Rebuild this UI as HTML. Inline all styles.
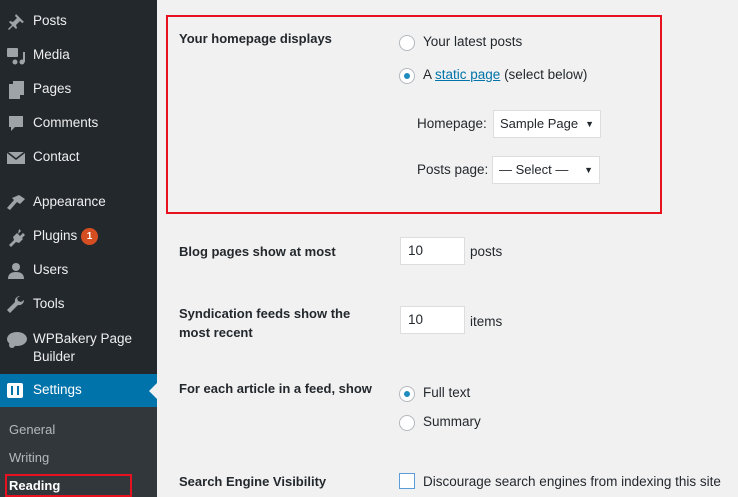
<!DOCTYPE html>
<html><head><meta charset="utf-8"><style>
*{margin:0;padding:0;box-sizing:border-box}
body{width:738px;height:497px;overflow:hidden;background:#f1f1f1;font-family:"Liberation Sans",sans-serif;font-size:14px;color:#23282d;position:relative}
.side{position:absolute;left:0;top:0;width:157px;height:497px;background:#23282d}
.it{position:absolute;left:33px;color:#eee;font-size:13.5px}
.ic{position:absolute;left:6px;width:19px;height:17px}
.sub{position:absolute;left:0;top:407px;width:157px;height:90px;background:#32373c}
.s{position:absolute;left:9px;color:#b4b9be;font-size:13px}
.a{position:absolute;font-size:13.5px}
.b{font-weight:bold;font-size:13px}
.radio{position:absolute;width:16px;height:16px;border:1px solid #b4b9be;border-radius:50%;background:#fff}
.radio.on::after{content:"";position:absolute;left:4px;top:4px;width:6px;height:6px;border-radius:50%;background:#1e8cbe}
.inp{position:absolute;background:#fff;border:1px solid #ddd;font-size:13.5px;padding:0 7px}
svg{position:absolute;left:6px}
</style></head><body>
<div class="side">
<svg style="top:12px" width="20" height="20" viewBox="0 0 20 20" fill="#9ea3a8"><path d="M10 2l8 8-2 1-2-2-4 4 1 3-1 1-3-3-4 4-1-1 4-4-3-3 1-1 3 1 4-4-2-2z"/></svg>
<div class="it" style="top:13px">Posts</div>
<svg style="top:46px" width="20" height="20" viewBox="0 0 20 20" fill="#9ea3a8"><rect x="1" y="2" width="11" height="9" rx="1"/><circle cx="9" cy="16" r="2.5"/><circle cx="16" cy="16" r="2.5"/><rect x="17" y="6" width="2" height="10"/></svg>
<div class="it" style="top:47px">Media</div>
<svg style="top:80px" width="20" height="20" viewBox="0 0 20 20" fill="#9ea3a8"><rect x="7" y="1" width="11" height="14"/><rect x="3" y="4" width="11" height="15"/></svg>
<div class="it" style="top:81px">Pages</div>
<svg style="top:114px" width="20" height="20" viewBox="0 0 20 20" fill="#9ea3a8"><path d="M3 2h14v11h-8l-4 4v-4H3z"/></svg>
<div class="it" style="top:115px">Comments</div>
<svg style="top:148px" width="20" height="20" viewBox="0 0 20 20" fill="#9ea3a8"><path d="M1 4h18v12H1z"/><path d="M1 4l9 7 9-7" stroke="#23282d" stroke-width="1.6" fill="none"/></svg>
<div class="it" style="top:149px">Contact</div>
<svg style="top:193px" width="20" height="20" viewBox="0 0 20 20" fill="#9ea3a8"><path d="M13 2l6 4-5 5-3-2-7 8-3-2 7-8-2-2z"/></svg>
<div class="it" style="top:194px">Appearance</div>
<svg style="top:227px" width="20" height="20" viewBox="0 0 20 20" fill="#9ea3a8"><path d="M13 2l2 2-3 3 2 2 3-3 2 2-3 3 1 1-4 4-3-1-5 5-2-2 5-5-1-3 4-4 1 1z"/></svg>
<div class="it" style="top:228px">Plugins <span style="display:inline-block;width:17px;height:17px;border-radius:50%;background:#d54e21;color:#fff;font-size:10px;text-align:center;line-height:17px;font-weight:bold;vertical-align:1px">1</span></div>
<svg style="top:261px" width="20" height="20" viewBox="0 0 20 20" fill="#9ea3a8"><circle cx="10" cy="6" r="4"/><path d="M2 18c0-5 3-7 8-7s8 2 8 7z"/></svg>
<div class="it" style="top:262px">Users</div>
<svg style="top:295px" width="20" height="20" viewBox="0 0 20 20" fill="#9ea3a8"><path d="M14 1a5 5 0 00-5 6L1 15l3 3 8-8a5 5 0 006-5l-3 2-3-1-1-3z"/></svg>
<div class="it" style="top:296px">Tools</div>
<svg style="top:330px" width="22" height="20" viewBox="0 0 22 20" fill="#9ea3a8"><ellipse cx="11" cy="9" rx="10" ry="7"/><circle cx="6" cy="15" r="3"/></svg>
<div class="it" style="top:330px;line-height:18px">WPBakery Page<br>Builder</div>
<div style="position:absolute;left:0;top:374px;width:157px;height:33px;background:#0073aa"></div>
<div style="position:absolute;left:7px;top:383px;width:16px;height:15px;background:#fff;border-radius:2px"></div>
<div style="position:absolute;left:11px;top:386px;width:2px;height:9px;background:#0073aa"></div>
<div style="position:absolute;left:17px;top:386px;width:2px;height:9px;background:#0073aa"></div>
<div class="it" style="top:382px;color:#fff">Settings</div>
<div style="position:absolute;left:149px;top:383px;width:0;height:0;border-top:8px solid transparent;border-bottom:8px solid transparent;border-right:8px solid #f1f1f1"></div>
<div class="sub"></div>
<div class="s" style="top:422px">General</div>
<div class="s" style="top:450px">Writing</div>
<div class="s" style="top:478px;color:#fff;font-weight:bold">Reading</div>
<div style="position:absolute;left:5px;top:474px;width:127px;height:23px;border:2px solid #e8111f"></div>
</div>
<div style="position:absolute;left:166px;top:15px;width:496px;height:199px;border:2px solid #e8111f"></div>
<div class="a b" style="left:179px;top:31px">Your homepage displays</div>
<div class="radio" style="left:399px;top:35px"></div><div class="a" style="left:423px;top:34px">Your latest posts</div>
<div class="radio on" style="left:399px;top:68px"></div><div class="a" style="left:423px;top:67px">A <span style="color:#0073aa;text-decoration:underline">static page</span> (select below)</div>
<div class="a" style="left:417px;top:116px">Homepage:</div>
<div class="inp" style="left:493px;top:110px;width:108px;height:28px;line-height:26px;font-size:13px;padding-left:6px">Sample Page<span style="position:absolute;right:6px;font-size:9px">▼</span></div>
<div class="a" style="left:417px;top:162px">Posts page:</div>
<div class="inp" style="left:492px;top:156px;width:108px;height:28px;line-height:26px;font-size:13px;padding-left:6px">— Select —<span style="position:absolute;right:6px;font-size:9px">▼</span></div>
<div class="a b" style="left:179px;top:244px">Blog pages show at most</div>
<div class="inp" style="left:400px;top:237px;width:65px;height:28px;line-height:26px">10</div><div class="a" style="left:470px;top:244px">posts</div>
<div class="a b" style="left:179px;top:304px;line-height:19px">Syndication feeds show the<br>most recent</div>
<div class="inp" style="left:400px;top:306px;width:65px;height:28px;line-height:26px">10</div><div class="a" style="left:470px;top:314px">items</div>
<div class="a b" style="left:179px;top:381px">For each article in a feed, show</div>
<div class="radio on" style="left:399px;top:386px"></div><div class="a" style="left:423px;top:385px">Full text</div>
<div class="radio" style="left:399px;top:415px"></div><div class="a" style="left:423px;top:414px">Summary</div>
<div class="a b" style="left:179px;top:474px">Search Engine Visibility</div>
<div style="position:absolute;left:399px;top:473px;width:16px;height:16px;border:1px solid #5b9dd9;background:#fff"></div>
<div class="a" style="left:423px;top:474px">Discourage search engines from indexing this site</div>
</body></html>
